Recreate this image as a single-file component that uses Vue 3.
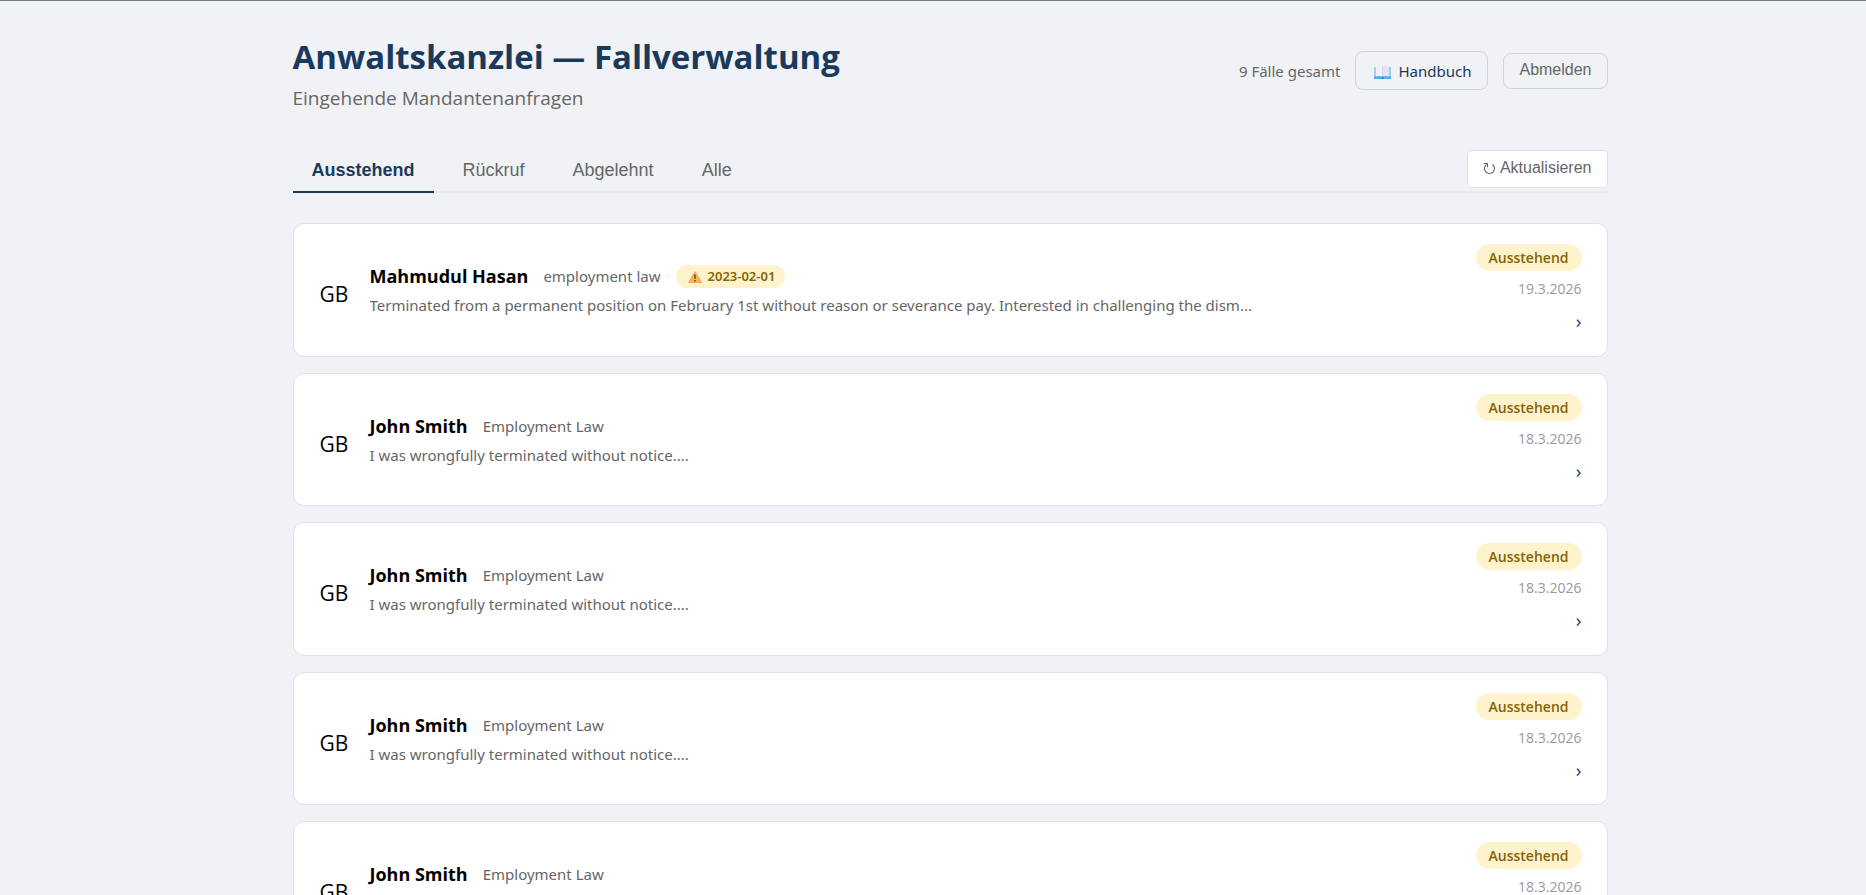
<script setup>
import { ref } from 'vue'

const tabs = ['Ausstehend', 'Rückruf', 'Abgelehnt', 'Alle']
const activeTab = ref('Ausstehend')

const john = {
  name: 'John Smith',
  area: 'Employment Law',
  summary: 'I was wrongfully terminated without notice....',
  date: '18.3.2026',
}

const cases = [
  {
    id: 1,
    name: 'Mahmudul Hasan',
    area: 'employment law',
    deadline: '2023-02-01',
    summary:
      'Terminated from a permanent position on February 1st without reason or severance pay. Interested in challenging the dism...',
    date: '19.3.2026',
  },
  { id: 2, ...john },
  { id: 3, ...john },
  { id: 4, ...john },
  { id: 5, ...john },
]
</script>

<template>
  <div class="page">
    <main class="container">
      <header class="header">
        <div>
          <h1 class="title">Anwaltskanzlei — Fallverwaltung</h1>
          <p class="subtitle">Eingehende Mandantenanfragen</p>
        </div>
        <div class="actions">
          <span class="total">9 Fälle gesamt</span>
          <a class="manual" href="#handbuch">
            <svg class="book" viewBox="0 0 17 14" aria-hidden="true">
              <path d="M0 2h2v9h13V2h2v12H0z" fill="#5aaef0" />
              <path d="M0 2h1v9h-1zM16 2h1v9h-1z" fill="#9bd0f5" />
              <path d="M1.500 1Q5 0 8.500 1.500V12Q5 10.500 1.500 11.500z" fill="#f3eefa" />
              <path d="M15.500 1Q12 0 8.500 1.500V12Q12 10.500 15.500 11.500z" fill="#e9e2f5" />
              <path d="M8.500 1.500V12" stroke="#d3cbe8" stroke-width="0.800" fill="none" />
              <path d="M7.500 11.500h2V14h-2z" fill="#3f7fd0" />
            </svg>
            Handbuch
          </a>
          <button class="logout" type="button">Abmelden</button>
        </div>
      </header>

      <nav class="toolbar" aria-label="Fallfilter">
        <div class="tabs">
          <button
            v-for="tab in tabs"
            :key="tab"
            type="button"
            class="tab"
            :class="{ active: tab === activeTab }"
            @click="activeTab = tab"
          >{{ tab }}</button>
        </div>
        <button class="refresh" type="button">
          <svg class="reload" viewBox="0 0 13 13" aria-hidden="true">
            <path d="M9.500 2.500A5 5 0 1 1 3.500 2.500" fill="none" stroke="currentColor" stroke-width="1.100" />
            <path d="M0.800 1.500H4.500V5.200" fill="none" stroke="currentColor" stroke-width="1.100" />
          </svg>
          Aktualisieren
        </button>
      </nav>

      <ul class="cases">
        <li v-for="item in cases" :key="item.id" class="case">
          <span class="flag">GB</span>
          <div class="body">
            <div class="heading">
              <strong class="name">{{ item.name }}</strong>
              <span class="area">{{ item.area }}</span>
              <span v-if="item.deadline" class="deadline">
                <svg class="warn" viewBox="0 0 14 12" aria-hidden="true">
                  <path d="M7 0.500L13.500 11.500H0.500z" fill="#fdb44b" stroke="#f5a04a" stroke-width="0.800" stroke-linejoin="round" />
                  <path d="M6.200 3.500h1.600L7.500 8h-1zM6.300 9h1.400v1.400H6.300z" fill="#4b4039" />
                </svg>
                {{ item.deadline }}
              </span>
            </div>
            <p class="summary">{{ item.summary }}</p>
          </div>
          <div class="meta">
            <span class="status">Ausstehend</span>
            <time class="date">{{ item.date }}</time>
            <span class="chevron">›</span>
          </div>
        </li>
      </ul>
    </main>
  </div>
</template>

<style>
body {
  background: #f0f2f6;
}
</style>

<style scoped>
.page {
  box-sizing: border-box;
  height: 100vh;
  overflow: hidden;
  padding-left: 34px;
  border-top: 1px solid #6f7b88;
  background: #f0f2f6;
  color: #000;
  font-family: "Open Sans", "Noto Sans", sans-serif;
  font-size: 15px;
  line-height: 1.5;
}
.container {
  max-width: 1315px;
  margin: 0 auto;
  padding-top: 34px;
}
.header {
  display: flex;
  justify-content: space-between;
  align-items: center;
}
.title {
  margin: 0;
  color: #1a3a5c;
  font-size: 33px;
  line-height: 44px;
  font-weight: 700;
}
.subtitle {
  margin: 4px 0 0;
  color: #666;
  font-size: 19px;
  line-height: 30px;
}
.actions {
  display: flex;
  align-items: center;
  gap: 15px;
  padding-bottom: 7px;
  font-family: "Noto Sans", "Open Sans", sans-serif;
}
.total {
  padding-top: 2px;
  color: #666;
}
.manual,
.logout {
  display: flex;
  align-items: center;
  box-sizing: border-box;
  border: 1px solid #cbd5e0;
  border-radius: 8px;
}
.manual {
  gap: 7px;
  height: 39px;
  padding: 2px 16px 0 18px;
  color: #1a3a5c;
  text-decoration: none;
}
.book {
  width: 17px;
  height: 14px;
}
.logout {
  height: 36px;
  padding: 0 15px 2px;
  background: transparent;
  color: #666;
  font: 16px "Liberation Sans", Arial, sans-serif;
}
.toolbar {
  display: flex;
  justify-content: space-between;
  align-items: flex-start;
  margin-top: 37px;
  border-bottom: 2px solid #e8eaed;
}
.tabs {
  display: flex;
  gap: 10px;
}
.tab {
  height: 43px;
  margin-bottom: -2px;
  padding: 0 19px;
  border: 0;
  border-bottom: 2px solid transparent;
  background: transparent;
  color: #666;
  font: 18px "Liberation Sans", Arial, sans-serif;
}
.tab.active {
  border-bottom-color: #1a3a5c;
  color: #1a3a5c;
  font-weight: 700;
}
.refresh {
  display: flex;
  align-items: center;
  gap: 4px;
  height: 38px;
  padding: 0 15px 2px;
  border: 1px solid #dde1e6;
  border-radius: 5px;
  background: #fff;
  color: #666;
  font: 16px "Liberation Sans", Arial, sans-serif;
}
.reload {
  width: 13px;
  height: 13px;
}
.cases {
  display: flex;
  flex-direction: column;
  gap: 16px;
  margin: 30px 0 0;
  padding: 0;
  list-style: none;
}
.case {
  display: flex;
  align-items: center;
  padding: 20px 25px 20px 26px;
  border: 1px solid #dee2e6;
  border-radius: 11px;
  background: #fff;
}
.flag {
  width: 50px;
  padding-top: 10px;
  font-size: 21px;
  font-weight: 500;
}
.body {
  flex: 1;
  min-width: 0;
}
.heading {
  display: flex;
  align-items: center;
  gap: 15px;
}
.name {
  font-size: 18px;
  line-height: 27px;
}
.area,
.summary {
  color: #666;
  font-family: "Noto Sans", "Open Sans", sans-serif;
}
.summary {
  margin: 4px 0 0;
  overflow: hidden;
  text-overflow: ellipsis;
  white-space: nowrap;
}
.deadline {
  display: flex;
  align-items: center;
  gap: 6px;
  padding: 0 10px 0 12px;
  border-radius: 12px;
  background: #fff3cd;
  color: #856404;
  font-family: "Noto Sans", "Open Sans", sans-serif;
  font-size: 13px;
  line-height: 23px;
  font-weight: 600;
}
.warn {
  width: 14px;
  height: 12px;
}
.meta {
  display: flex;
  flex-direction: column;
  align-items: flex-end;
  gap: 7px;
}
.status {
  padding: 0 13px;
  border-radius: 14px;
  background: #fff3cd;
  color: #856404;
  font-size: 14px;
  line-height: 27px;
  font-weight: 600;
}
.date {
  color: #999;
  font-size: 14px;
  line-height: 22px;
}
.chevron {
  color: #1a3a5c;
  font-size: 19px;
}
</style>
